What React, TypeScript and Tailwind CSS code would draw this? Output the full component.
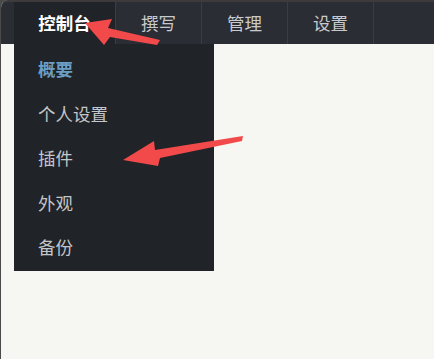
export default function App() {
  const tabs = ["撰写", "管理", "设置"];
  const items = ["个人设置", "插件", "外观", "备份"];

  return (
    <div
      className="relative w-[434px] h-[359px] overflow-hidden bg-[#4a4a4a]"
      style={{ fontFamily: '"Noto Sans CJK SC", "Noto Sans", sans-serif' }}
    >
      <div className="ml-[1px] h-full rounded-tl-[8px] overflow-hidden bg-[#f6f6f2] flex flex-col">
        {/* Top nav */}
        <nav className="h-[44px] shrink-0 bg-[#2a2d34] border-t-2 border-[#3c3a3a] flex pl-[13px]">
          <div className="relative h-full">
            <div className="h-full w-[102px] flex items-center justify-center bg-[#202328] border-r border-[#3a3d45] text-white font-bold text-[17.5px]">
              控制台
            </div>
            {/* Dropdown */}
            <div className="absolute left-0 top-full w-[200px] bg-[#202328] pt-[3px] pb-[1px] z-10">
              <div className="h-[44.5px] flex items-center pl-[24px] text-[17.5px] font-bold text-[#6a9ec4]">
                概要
              </div>
              {items.map((t) => (
                <div
                  key={t}
                  className="h-[44.5px] flex items-center pl-[24px] text-[17.5px] text-[#c3c6ca]"
                >
                  {t}
                </div>
              ))}
            </div>
          </div>
          {tabs.map((t) => (
            <div
              key={t}
              className="h-full w-[86px] flex items-center justify-center border-r border-[#3a3d45] text-[#c8cacd] text-[17.5px]"
            >
              {t}
            </div>
          ))}
        </nav>
        <div className="flex-1" />
      </div>

      {/* Annotation arrows */}
      <svg
        className="absolute inset-0 z-20 pointer-events-none"
        width="434"
        height="359"
        viewBox="0 0 434 359"
      >
        <polygon
          fill="#f24a4a"
          points="85,23 112,19 108,28 160,40 157,45 110,37 104,45"
        />
        <polygon
          fill="#f24a4a"
          points="123,160 154,141 155,150 243,136 242,141 160,158 158,166"
        />
      </svg>
    </div>
  );
}
